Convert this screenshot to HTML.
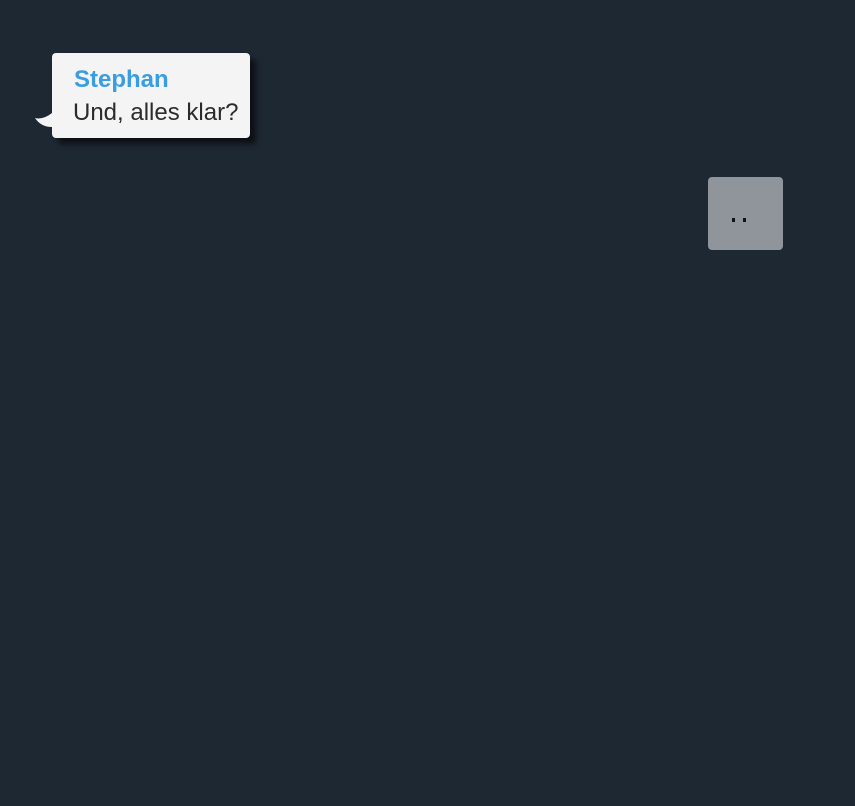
<!DOCTYPE html>
<html><head><meta charset="utf-8"><style>
html,body{margin:0;padding:0;width:855px;height:806px;background:#1e2833;overflow:hidden;font-family:"Liberation Sans",sans-serif}
.b{position:absolute;left:52px;top:53px;width:198px;height:85px;background:#f4f4f4;border-radius:4px;box-shadow:6px 6px 6px rgba(0,0,0,0.6)}
.n{position:absolute;left:22px;top:13px;color:#3a9de0;font-weight:bold;font-size:24px;line-height:28px}
.t{position:absolute;left:21px;top:46px;color:#2b2b2b;font-size:24px;line-height:28px}
.box{position:absolute;left:708px;top:177px;width:75px;height:73px;background:#8f959a;border-radius:4px}
.d{position:absolute;top:41px;width:3px;height:4px;background:#111}
</style></head><body>
<svg style="position:absolute;left:33px;top:110px" width="22" height="20"><path d="M2 8 Q10 10 19 3 L19 17 Q8 17 2 8Z" fill="#f4f4f4"/></svg>
<div class="b"><div class="n">Stephan</div><div class="t">Und, alles klar?</div></div>
<div class="box"><div class="d" style="left:24px"></div><div class="d" style="left:35px"></div></div>
</body></html>
